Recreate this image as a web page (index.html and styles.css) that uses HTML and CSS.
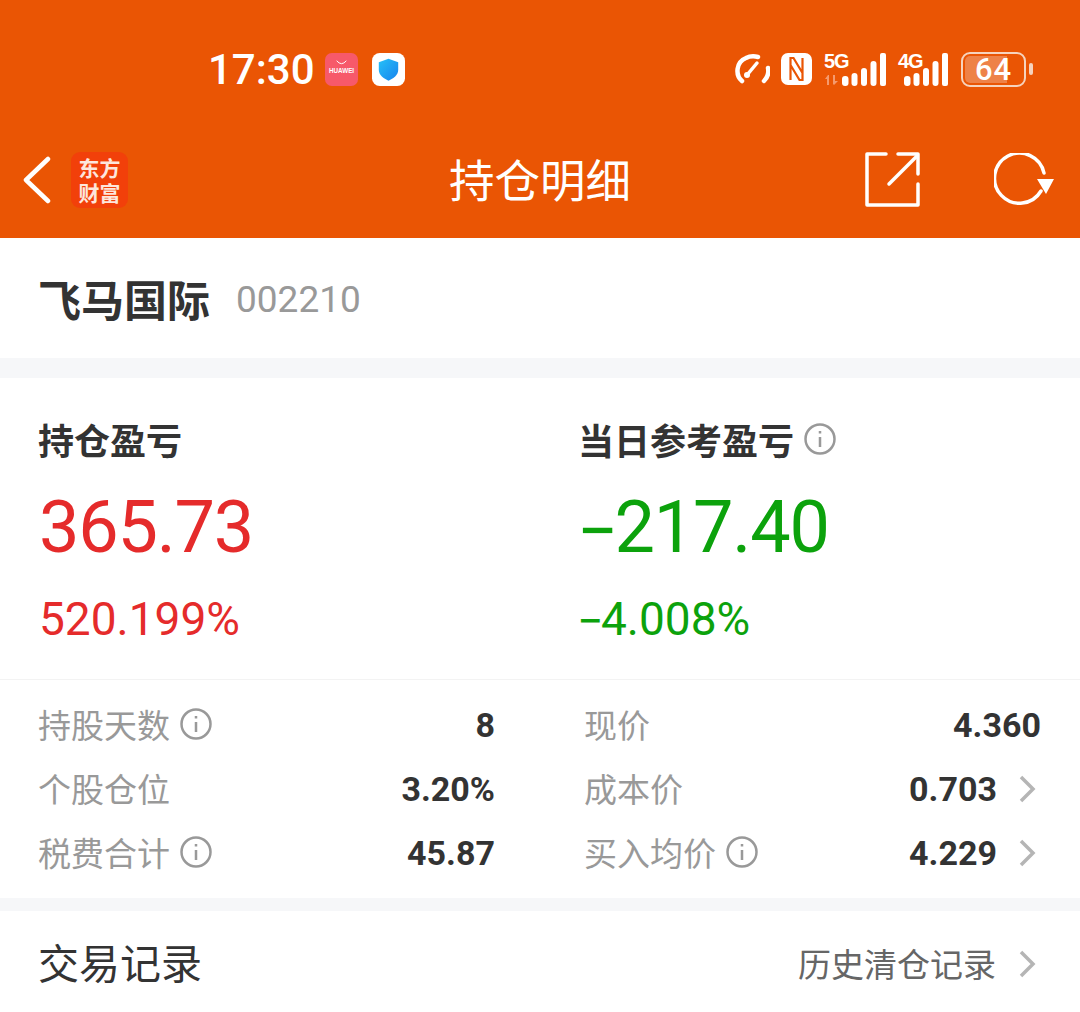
FILE: index.html
```html
<!DOCTYPE html>
<html lang="zh">
<head>
    <meta charset="utf-8">
    <title>持仓明细</title>
    <link rel="stylesheet" href="styles.css">
</head>
<body>
    <header class="header">
        <div class="status-bar">
            <span class="time">17:30</span>
            <svg class="app-icon" viewBox="0 0 34 34">
                <rect width="34" height="34" rx="7" fill="#f7596a"/>
                <path d="M12 8q5 6 10 0" fill="none" stroke="#fff" stroke-width="1"/>
                <text x="17" y="21" class="huawei-text">HUAWEI</text>
            </svg>
            <svg class="app-icon" viewBox="0 0 34 34">
                <defs>
                    <linearGradient id="shieldFill" x1="0" y1="0" x2="1" y2="1">
                        <stop offset="0" stop-color="#27c0f7"/>
                        <stop offset="1" stop-color="#1683ee"/>
                    </linearGradient>
                </defs>
                <rect width="34" height="34" rx="8" fill="#fff"/>
                <path d="M17 6l10 3.500v8c0 5-5 9-10 11c-5-2-10-6-10-11v-8z" fill="url(#shieldFill)"/>
            </svg>
            <div class="status-right">
                <svg class="st-speed" viewBox="0 0 36 30" fill="none" stroke="#fff" stroke-linecap="round">
                    <path d="M8 27C1 21 2 8 12 4C16 2 20 2 24 3" stroke-width="4.500"/>
                    <path d="M34 14c1 5-1 10-4 13" stroke-width="4.500"/>
                    <path d="M13 21l10-12" stroke-width="3.500"/>
                    <circle cx="13" cy="21" r="3" fill="#fff" stroke="none"/>
                </svg>
                <svg class="st-nfc" viewBox="0 0 31 32">
                    <rect width="31" height="32" rx="7" fill="#fff"/>
                    <path d="M9.500 27V5h3l9 15M21.500 5v22h-3l-9-15" fill="none" stroke="#ea5504" stroke-width="2.200"/>
                </svg>
                <div class="signal first">
                    <span class="net">5G</span>
                    <svg class="updown" viewBox="0 0 14 10" fill="#f59a6e">
                        <path d="M0 4l3-4h1v10h-2v-6zM8 0h2v6h3l-4 4-1-1z"/>
                    </svg>
                    <svg class="bars" viewBox="0 0 44 33" fill="#fff">
                        <rect x="0" y="23" width="6.500" height="10" rx="3"/>
                        <rect x="9.500" y="20" width="6" height="13" rx="3"/>
                        <rect x="19" y="15" width="6" height="18" rx="3"/>
                        <rect x="28.500" y="8" width="6" height="25" rx="3"/>
                        <rect x="38" y="0" width="6" height="33" rx="2"/>
                    </svg>
                </div>
                <div class="signal second">
                    <span class="net">4G</span>
                    <svg class="bars" viewBox="0 0 44 33" fill="#fff">
                        <rect x="0" y="23" width="6.500" height="10" rx="3"/>
                        <rect x="9.500" y="20" width="6" height="13" rx="3"/>
                        <rect x="19" y="15" width="6" height="18" rx="3"/>
                        <rect x="28.500" y="8" width="6" height="25" rx="3"/>
                        <rect x="38" y="0" width="6" height="33" rx="2"/>
                    </svg>
                </div>
                <div class="battery">
                    <div class="battery-body"><span class="battery-fill"></span><span class="battery-num">64</span></div>
                    <span class="battery-cap"></span>
                </div>
            </div>
        </div>
        <nav class="nav-bar">
            <div class="nav-left">
                <svg class="back" viewBox="0 0 30 48" fill="none" stroke="#fff" stroke-width="4.500" stroke-linecap="round" stroke-linejoin="round">
                    <path d="M26 3L4 24l22 21"/>
                </svg>
                <div class="logo"><div>东方</div><div>财富</div></div>
            </div>
            <h1 class="nav-title">持仓明细</h1>
            <div class="nav-right">
                <svg class="share" viewBox="0 0 56 56" fill="none" stroke="#fff" stroke-width="3.500" stroke-linecap="round" stroke-linejoin="round">
                    <path d="M21 2H2v51h51V32"/>
                    <path d="M24 32L52 4"/>
                    <path d="M33 2h20v20"/>
                </svg>
                <svg class="refresh" viewBox="0 0 60 54" fill="none">
                    <path d="M47 38A25 25 0 1 1 50 20" stroke="#fff" stroke-width="3.500" stroke-linecap="round"/>
                    <path d="M43 26h17l-8 15z" fill="#fff"/>
                </svg>
            </div>
        </nav>
    </header>

    <section class="stock-row">
        <span class="stock-name">飞马国际</span>
        <span class="stock-code">002210</span>
    </section>

    <section class="summary">
        <div class="summary-col">
            <h2 class="summary-label">持仓盈亏</h2>
            <div class="summary-value red">365.73</div>
            <div class="summary-pct red">520.199%</div>
        </div>
        <div class="summary-col">
            <h2 class="summary-label">当日参考盈亏 <svg class="info" viewBox="0 0 32 32"><circle cx="16" cy="16" r="14.500"/><path d="M16 14v10M16 8v2.500"/></svg></h2>
            <div class="summary-value green"><span class="minus">−</span>217.40</div>
            <div class="summary-pct green"><span class="minus">−</span>4.008%</div>
        </div>
    </section>

    <section class="stats">
        <div class="stat">
            <span class="stat-label">持股天数 <svg class="info" viewBox="0 0 32 32"><circle cx="16" cy="16" r="14.500"/><path d="M16 14v10M16 8v2.500"/></svg></span>
            <span class="stat-value">8</span>
        </div>
        <div class="stat">
            <span class="stat-label">现价</span>
            <span class="stat-value">4.360</span>
        </div>
        <div class="stat">
            <span class="stat-label">个股仓位</span>
            <span class="stat-value">3.20%</span>
        </div>
        <div class="stat">
            <span class="stat-label">成本价</span>
            <span class="stat-value">0.703</span>
            <svg class="chevron" viewBox="0 0 18 28"><path d="M3 2l12 12L3 26"/></svg>
        </div>
        <div class="stat">
            <span class="stat-label">税费合计 <svg class="info" viewBox="0 0 32 32"><circle cx="16" cy="16" r="14.500"/><path d="M16 14v10M16 8v2.500"/></svg></span>
            <span class="stat-value">45.87</span>
        </div>
        <div class="stat">
            <span class="stat-label">买入均价 <svg class="info" viewBox="0 0 32 32"><circle cx="16" cy="16" r="14.500"/><path d="M16 14v10M16 8v2.500"/></svg></span>
            <span class="stat-value">4.229</span>
            <svg class="chevron" viewBox="0 0 18 28"><path d="M3 2l12 12L3 26"/></svg>
        </div>
    </section>

    <section class="trades">
        <span class="trades-title">交易记录</span>
        <span class="trades-link">历史清仓记录</span>
        <svg class="chevron" viewBox="0 0 18 28"><path d="M3 2l12 12L3 26"/></svg>
    </section>
</body>
</html>
```

FILE: styles.css
```css
body {
    margin: 0;
    height: 1012px;
    overflow: hidden;
    background-color: #fff;
    color: #333;
    font-family: "Noto Sans", Roboto, "Noto Sans CJK SC", sans-serif;
}

.header {
    background-color: #ea5504;
    color: #fff;
    height: 238px;
}

.status-bar {
    display: flex;
    align-items: center;
    height: 130px;
    padding: 8px 47px 0 208px;
    box-sizing: border-box;
}

.time {
    font-family: Roboto, sans-serif;
    font-size: 42px;
    font-weight: 500;
    line-height: 50px;
    margin-right: 10px;
    margin-top: 2px;
}

.app-icon {
    width: 33px;
    height: 33px;
    margin-right: 14px;
}

.huawei-text {
    font-family: "Liberation Sans", sans-serif;
    font-size: 6.500px;
    font-weight: bold;
    fill: #fff;
    text-anchor: middle;
}

.status-right {
    display: flex;
    align-items: center;
    margin-left: auto;
}

.st-speed {
    width: 36px;
    height: 30px;
    margin-right: 11px;
}

.st-nfc {
    width: 31px;
    height: 32px;
    margin-right: 12px;
}

.signal {
    position: relative;
    height: 33px;
    display: flex;
    justify-content: flex-end;
}

.signal.first {
    width: 62px;
}

.signal.second {
    width: 50px;
    margin-left: 12px;
}

.net {
    position: absolute;
    left: 0;
    top: -2px;
    font-family: "Liberation Sans", sans-serif;
    font-size: 20px;
    font-weight: bold;
    line-height: 20px;
    letter-spacing: -1px;
}

.updown {
    position: absolute;
    left: 1px;
    top: 22px;
    width: 14px;
    height: 10px;
}

.bars {
    width: 44px;
    height: 33px;
}

.battery {
    display: flex;
    align-items: center;
    margin-left: 13px;
}

.battery-body {
    position: relative;
    width: 65px;
    height: 35px;
    box-sizing: border-box;
    border: 2px solid #f6d3bd;
    border-radius: 9px;
    overflow: hidden;
}

.battery-fill {
    position: absolute;
    left: 2px;
    top: 2px;
    bottom: 2px;
    width: 42px;
    background-color: #ee8248;
    border-radius: 5px 0 0 5px;
}

.battery-num {
    position: absolute;
    left: 12px;
    top: 0;
    font-family: Roboto, sans-serif;
    font-size: 31px;
    font-weight: 500;
    line-height: 31px;
    letter-spacing: 1px;
}

.battery-cap {
    width: 4px;
    height: 12px;
    margin-left: 3px;
    background-color: #f6d3bd;
    border-radius: 2px;
}

.nav-bar {
    display: grid;
    grid-template-columns: 1fr auto 1fr;
    align-items: center;
    height: 108px;
    padding-bottom: 8px;
    box-sizing: border-box;
}

.nav-left {
    display: flex;
    align-items: center;
    padding-left: 22px;
}

.back {
    width: 30px;
    height: 48px;
}

.logo {
    width: 57px;
    height: 56px;
    margin-left: 19px;
    background-color: #f2400a;
    border-radius: 9px;
    font-family: "Noto Sans CJK SC", sans-serif;
    font-size: 21px;
    font-weight: bold;
    line-height: 25px;
    text-align: center;
    padding-top: 3px;
    box-sizing: border-box;
    color: #fde6dc;
}

.nav-title {
    margin: 0 0 4px;
    font-family: "Noto Sans CJK SC", sans-serif;
    font-size: 45.500px;
    font-weight: 400;
    line-height: 60px;
}

.nav-right {
    display: flex;
    align-items: center;
    justify-content: flex-end;
    padding-right: 26px;
}

.share {
    width: 56px;
    height: 56px;
}

.refresh {
    width: 60px;
    height: 54px;
    margin-left: 73px;
}

.stock-row {
    display: flex;
    align-items: center;
    height: 140px;
    padding-left: 38px;
    box-sizing: border-box;
    border-bottom: 20px solid #f6f7f9;
}

.stock-name {
    font-family: "Noto Sans CJK SC", sans-serif;
    font-size: 43px;
    font-weight: bold;
}

.stock-code {
    margin-left: 26px;
    margin-top: 3px;
    font-family: Roboto, sans-serif;
    font-size: 37px;
    color: #999;
}

.summary {
    display: grid;
    grid-template-columns: 540px 540px;
    height: 302px;
    padding-top: 37px;
    box-sizing: border-box;
    border-bottom: 1px solid #f3f3f3;
}

.summary-col {
    padding-left: 39px;
}

.summary-label {
    margin: 0 0 0 -1px;
    display: flex;
    align-items: center;
    gap: 10px;
    font-family: "Noto Sans CJK SC", sans-serif;
    font-size: 36px;
    font-weight: bold;
    line-height: 48px;
}

.summary-value {
    margin-top: 23px;
    font-family: Roboto, sans-serif;
    font-size: 72px;
    line-height: 84px;
    letter-spacing: -1.200px;
}

.summary-pct {
    margin-top: 21px;
    font-family: Roboto, sans-serif;
    font-size: 46px;
    line-height: 56px;
}

.minus {
    margin-left: -2px;
    line-height: 1;
    letter-spacing: -0.05em;
    vertical-align: -0.05em;
}

.red {
    color: #e52b2b;
}

.green {
    color: #0ca20c;
}

.info {
    width: 32px;
    height: 32px;
    fill: none;
    stroke: #999;
    stroke-width: 2.500;
    flex-shrink: 0;
}

.stats {
    display: grid;
    grid-template-columns: 456px 456px;
    column-gap: 90px;
    grid-auto-rows: 64px;
    padding: 13px 39px;
    height: 231px;
    box-sizing: border-box;
    align-content: start;
    border-bottom: 13px solid #f6f7f9;
}

.stat {
    display: flex;
    align-items: center;
}

.stat-label {
    display: flex;
    align-items: center;
    gap: 10px;
    margin-left: -1px;
    padding-bottom: 3px;
    font-family: "Noto Sans CJK SC", sans-serif;
    font-size: 33px;
    color: #999;
}

.stat-value {
    margin-left: auto;
    font-family: Roboto, sans-serif;
    font-size: 34px;
    font-weight: bold;
    color: #333;
}

.chevron {
    width: 18px;
    height: 28px;
    margin-left: 21px;
    margin-right: 5px;
    fill: none;
    stroke: #b5b5b5;
    stroke-width: 3.500;
}

.trades {
    display: flex;
    align-items: center;
    height: 101px;
    padding: 0 39px 2px;
    box-sizing: border-box;
}

.trades-title {
    margin-left: -1px;
    font-family: "Noto Sans CJK SC", sans-serif;
    font-size: 41px;
}

.trades-link {
    margin-left: auto;
    margin-top: 5px;
    font-family: "Noto Sans CJK SC", sans-serif;
    font-size: 33px;
    color: #666;
}

.trades .chevron {
    margin-top: 7px;
    margin-left: 22px;
}
```
